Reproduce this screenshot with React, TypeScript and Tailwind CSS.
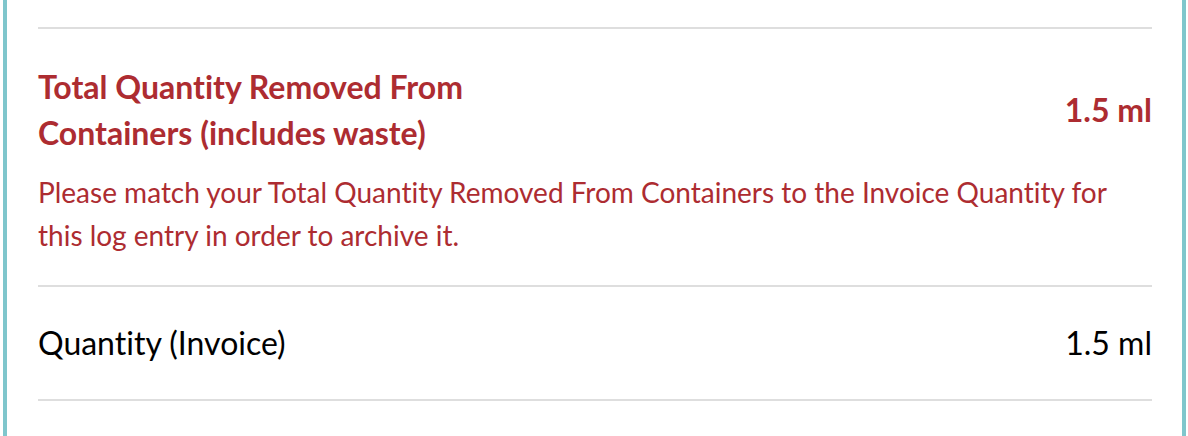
export default function App() {
  return (
    <div className="w-full h-[436px] bg-white font-['Lato',sans-serif] [font-variant-ligatures:none]">
      <div className="ml-[3px] mr-[2px] h-full border-l-4 border-r-4 border-[#7fc6cc] bg-white pl-[31px] pr-[30px] pt-[27px]">
        {/* Total removed */}
        <div className="border-t-2 border-[#dedede] pt-[35px] pb-[28px]">
          <div className="flex items-center justify-between">
            <h3 className="w-1/2 text-[32px] leading-[46px] font-bold text-[#ad2c31]">
              Total Quantity Removed From Containers (includes waste)
            </h3>
            <span className="text-[32px] leading-[46px] font-bold text-[#ad2c31]">1.5 ml</span>
          </div>
          <p className="mt-[15px] text-[28px] leading-[43px] text-[#ad2c31]">
            Please match your Total Quantity Removed From Containers to the Invoice Quantity for this log entry in order to archive it.
          </p>
        </div>

        {/* Invoice */}
        <div className="flex items-center justify-between border-t-2 border-b-2 border-[#dedede] py-[36px] text-[32px] leading-[40px] text-black">
          <span>Quantity (Invoice)</span>
          <span>1.5 ml</span>
        </div>
      </div>
    </div>
  );
}
